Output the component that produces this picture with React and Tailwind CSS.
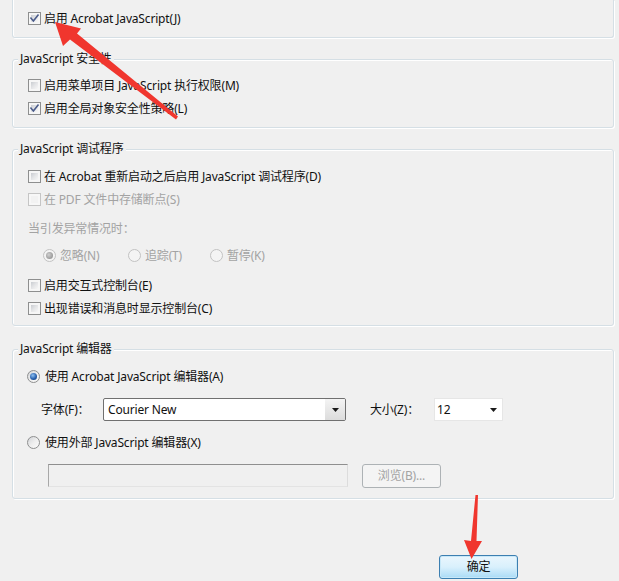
import React from "react";

function Checkbox({ checked = false, disabled = false }) {
  return (
    <span
      className={
        "relative flex w-[13px] h-[13px] shrink-0 border p-[2px] " +
        (disabled ? "border-[#c5c5c5] bg-[#f7f7f7]" : "border-[#8e8f8f] bg-[#f6f6f6]")
      }
    >
      <span
        className={
          "flex-1 " +
          (disabled
            ? "bg-[#f2f2f2]"
            : "bg-gradient-to-br from-[#c9ccd1] via-[#e4e5e7] to-[#f7f7f7]")
        }
      />
      {checked && (
        <svg className="absolute inset-0" width="11" height="11" viewBox="0 0 11 11">
          <path d="M2 5.2 L4.4 8 L9 2.2" fill="none" stroke="#4a5b8a" strokeWidth="1.6" strokeLinecap="square" />
        </svg>
      )}
    </span>
  );
}

function Radio({ checked = false, disabled = false }) {
  return (
    <span
      className={
        "flex items-center justify-center w-[13px] h-[13px] shrink-0 rounded-full border " +
        (disabled
          ? "border-[#c2c2c2] bg-[#f4f4f4]"
          : "border-[#8e8f8f] bg-gradient-to-br from-[#d2d4d8] via-[#eeeeee] to-[#fbfbfb]")
      }
    >
      {checked && (
        <span
          className={
            "w-[7px] h-[7px] rounded-full " +
            (disabled
              ? "bg-[radial-gradient(circle_at_40%_40%,#d0d0d0,#9a9a9a_70%)]"
              : "bg-[radial-gradient(circle_at_40%_35%,#8fc0f0,#2a63b0_55%,#0e2f66)]")
          }
        />
      )}
    </span>
  );
}

function CheckRow({ checked, disabled, children }) {
  return (
    <div className="h-[23px] flex items-center gap-[3px]">
      <Checkbox checked={checked} disabled={disabled} />
      <span className={disabled ? "text-[#a3a3a3]" : "text-[#111]"}>{children}</span>
    </div>
  );
}

function Group({ title, className, bodyClass, children }) {
  return (
    <div
      className={
        "ml-[12px] w-[602px] border border-[#d5dfe5] rounded-[3px] shadow-[inset_1px_1px_0_#ffffff,1px_1px_0_#ffffff] " +
        className
      }
    >
      <div className="-mt-[9px] ml-[5px] px-[2px] w-fit bg-[#f0f0f0] text-[#111]">{title}</div>
      <div className={bodyClass}>{children}</div>
    </div>
  );
}

function Arrow() {
  return (
    <svg className="absolute inset-0 pointer-events-none" width="619" height="581" viewBox="0 0 619 581">
      <polygon
        points="55,22 81,28.5 77,33.5 178,116.5 176,119.5 70,39.5 63,46"
        fill="#f0362e"
      />
      <polygon
        points="471.5,559 464,540 471,541 475.5,495 478,495 476.5,541 482,541"
        fill="#f0362e"
      />
    </svg>
  );
}

export default function App() {
  return (
    <div className="relative w-[619px] h-[581px] overflow-hidden bg-[#f0f0f0] text-[12px] leading-[16px] tracking-[-0.17px] text-[#111] font-['Noto_Sans','Noto_Sans_CJK_SC',sans-serif]">
      {/* top group (cut off) */}
      <div className="ml-[12px] w-[602px] border-x border-b border-[#d5dfe5] rounded-b-[3px] shadow-[inset_1px_0_0_#ffffff,1px_1px_0_#ffffff] pt-[7px] pb-[7px] pl-[15px]">
        <CheckRow checked>启用 Acrobat JavaScript(J)</CheckRow>
      </div>

      <Group title="JavaScript 安全性" className="mt-[21px]" bodyClass="pt-[7px] pb-[7px] pl-[15px]">
        <CheckRow>启用菜单项目 JavaScript 执行权限(M)</CheckRow>
        <CheckRow checked>启用全局对象安全性策略(L)</CheckRow>
      </Group>

      <Group title="JavaScript 调试程序" className="mt-[21px]" bodyClass="pt-[8px] pb-[5px] pl-[15px]">
        <CheckRow>在 Acrobat 重新启动之后启用 JavaScript 调试程序(D)</CheckRow>
        <CheckRow disabled>在 PDF 文件中存储断点(S)</CheckRow>
        <div className="mt-[6px] h-[23px] flex items-center text-[#a3a3a3]">当引发异常情况时：</div>
        <div className="mt-[4px] h-[23px] flex items-center pl-[15px] text-[#a3a3a3]">
          <div className="w-[85px] flex items-center gap-[4px]">
            <Radio checked disabled />
            <span>忽略(N)</span>
          </div>
          <div className="w-[82px] flex items-center gap-[4px]">
            <Radio disabled />
            <span>追踪(T)</span>
          </div>
          <div className="flex items-center gap-[4px]">
            <Radio disabled />
            <span>暂停(K)</span>
          </div>
        </div>
        <div className="mt-[7px]">
          <CheckRow>启用交互式控制台(E)</CheckRow>
          <CheckRow>出现错误和消息时显示控制台(C)</CheckRow>
        </div>
      </Group>

      <Group title="JavaScript 编辑器" className="mt-[23px]" bodyClass="pt-[8px] pb-[10px] pl-[14px]">
        <div className="h-[23px] flex items-center gap-[5px]">
          <Radio checked />
          <span>使用 Acrobat JavaScript 编辑器(A)</span>
        </div>
        <div className="mt-[10px] h-[23px] flex items-center pl-[14px]">
          <span className="w-[62px]">字体(F)：</span>
          <div className="w-[243px] h-[23px] flex border border-[#707070] rounded-[2px] bg-white overflow-hidden">
            <span className="flex-1 flex items-center pl-[4px]">Courier New</span>
            <span className="w-[20px] flex items-center justify-center bg-gradient-to-b from-[#f4f4f4] to-[#dcdcdc]">
              <svg width="7" height="4" viewBox="0 0 7 4">
                <path d="M0 0H7L3.5 4Z" fill="#1a1a1a" />
              </svg>
            </span>
          </div>
          <span className="ml-[24px] w-[64px]">大小(Z)：</span>
          <div className="w-[69px] h-[23px] flex items-center justify-between border border-[#e6e6e6] bg-white pl-[2px] pr-[5px]">
            <span>12</span>
            <svg width="7" height="4" viewBox="0 0 7 4">
              <path d="M0 0H7L3.5 4Z" fill="#1a1a1a" />
            </svg>
          </div>
        </div>
        <div className="mt-[10px] h-[23px] flex items-center gap-[5px]">
          <Radio />
          <span>使用外部 JavaScript 编辑器(X)</span>
        </div>
        <div className="mt-[10px] h-[24px] flex items-start pl-[21px]">
          <div className="w-[300px] h-[23px] border border-t-[#8f8f8f] border-l-[#a8a8a8] border-r-[#dcdcdc] border-b-[#e3e3e3] bg-[#f0f0f0]" />
          <div className="ml-[14px] w-[79px] h-[24px] flex items-center justify-center border border-[#adb2b5] rounded-[3px] bg-[#f4f4f4] text-[#a3a3a3]">
            浏览(B)...
          </div>
        </div>
      </Group>

      <div className="mt-[56px] ml-[439px] w-[79px] h-[24px] flex items-center justify-center border border-[#3c7fb1] rounded-[3px] bg-gradient-to-b from-[#eaf6fd] via-[#d9f0fc] to-[#a9dbf6] shadow-[inset_0_0_0_1px_#c8e8f8] text-[#111]">
        确定
      </div>

      <Arrow />
    </div>
  );
}
